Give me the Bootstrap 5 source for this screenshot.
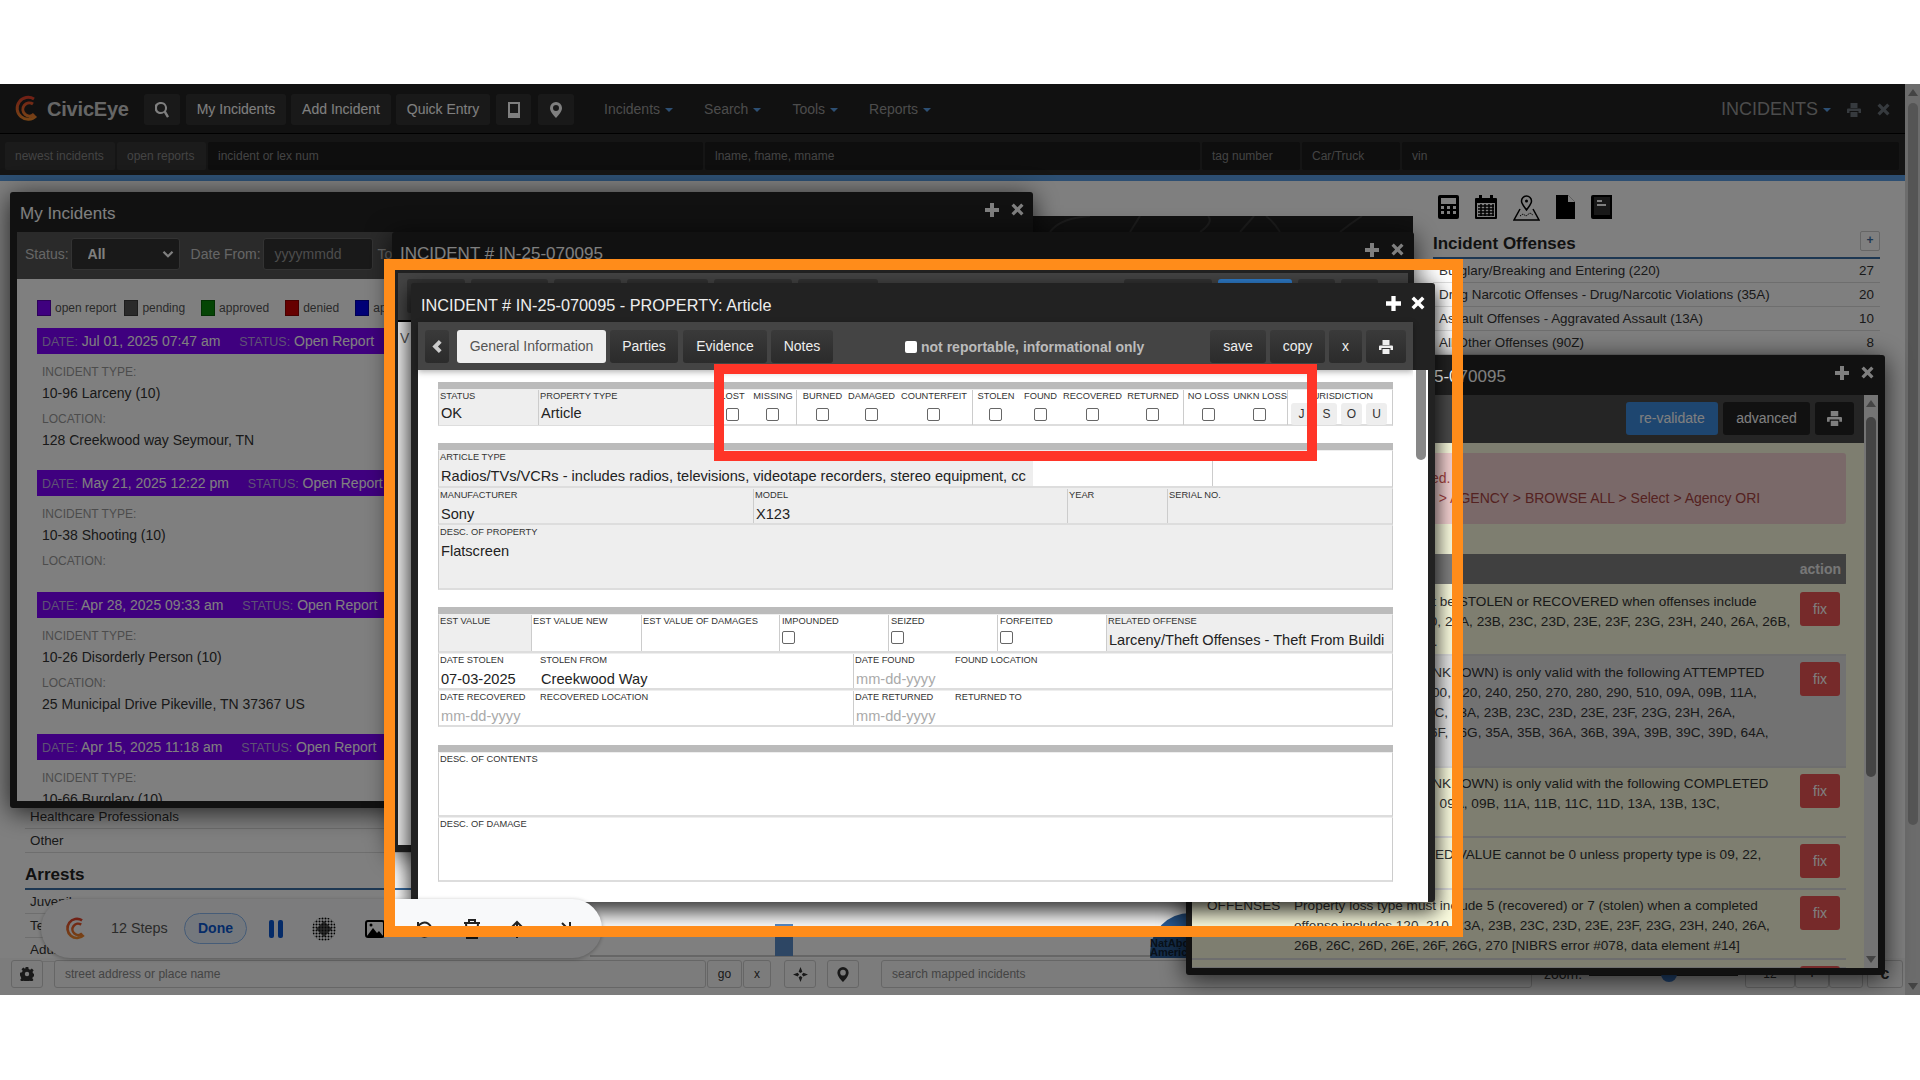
<!DOCTYPE html>
<html lang="en">
<head>
  <meta charset="UTF-8">
  <title>CivicEye - Incident Property</title>
  <link rel="stylesheet" href="https://cdn.jsdelivr.net/npm/bootstrap@5.3.0/dist/css/bootstrap.min.css">
  <style>
    body { margin: 0; background: #fff; font-family: "Liberation Sans", Arial, sans-serif; font-size: 14px; color: #333; }
    .app { position: relative; margin-top: 84px; height: 911px; overflow: hidden; background: #fff; }
    .ico { display: block; fill: currentColor; fill-rule: evenodd; }

    /* top bars */
    .topbar { height: 50px; background: #222; padding: 10px 30px 0 15px; border-bottom: 1px solid #000; }
    .brand { width: 129px; color: #ccc; font-size: 20px; font-weight: 700; letter-spacing: -.2px; line-height: 30px; }
    .nbtn { height: 31px; padding: 0; background: #333; color: #fff; border: 0; border-radius: 3px; font-size: 14px; line-height: 31px; text-align: center; }
    .nb-search { width: 36px; margin-right: 6px; }
    .nb-mine, .nb-add { width: 100px; margin-right: 5px; }
    .nb-quick { width: 94px; margin-right: 6px; }
    .nb-book { width: 35px; margin-right: 7px; }
    .nb-pin { width: 36px; margin-right: 30px; }
    .menu-item { color: #999; margin-right: 31px; line-height: 31px; white-space: nowrap; }
    .caret-dn { display: inline-block; margin-left: 5px; border: 4px solid transparent; border-top-color: #5a9fe6; border-bottom: 0; vertical-align: middle; }
    .modulename { color: #999; font-size: 18px; line-height: 31px; }
    .subbar { height: 41px; background: #2a2a2a; padding: 8px 5px 0 5px; gap: 2px; }
    .sbox { height: 28px; background: #1c1c1c; color: #888; font-size: 12px; line-height: 28px; padding: 0 10px; border-radius: 2px; white-space: nowrap; }
    .sbtn { background: #363636; }
    .sb-a { width: 110px; } .sb-b { width: 89px; } .sb-c { width: 495px; } .sb-d { width: 495px; }
    .sb-e { width: 98px; } .sb-f { width: 98px; } .sb-g { width: 497px; }
    .blueline { height: 6px; background: #5a9fe6; }

    /* page under the windows */
    .mainarea { height: 777px; }
    .leftcol { width: 590px; padding: 0 0 0 25px; margin-bottom: -4px; }
    .leftlist .lrow { padding-left: 5px; height: 24px; line-height: 24px; font-size: 13.4px; border-bottom: 1px solid #ddd; white-space: nowrap; }
    .lhead { font-size: 17px; font-weight: 700; line-height: 24px; margin-top: 10px; padding-bottom: 1px; border-bottom: 2px solid #3a6ea5; color: #222; }
    .mapcol { width: 843px; position: relative; overflow: hidden; }
    .mapline { position: absolute; left: 0; right: 0; bottom: 1px; height: 2px; background: #ccc; }
    .mapbar { position: absolute; left: 185px; bottom: 2px; width: 18px; height: 32px; background: #5a8cc8; }
    .globe { position: absolute; left: 560px; bottom: -35px; width: 80px; height: 80px; border-radius: 50%; background: #2b5f9c; }
    .globetxt { position: absolute; left: 560px; bottom: 1px; font-size: 11px; line-height: 9px; color: #123; font-weight: 700; white-space: nowrap; }
    .rightcol { width: 447px; padding-top: 14px; }
    .tool-ico { gap: 16px; padding-left: 5px; height: 26px; color: #000; }
    .rhead { margin-top: 11px; height: 27px; border-bottom: 2px solid #3a6ea5; font-size: 17px; font-weight: 700; color: #222; line-height: 24px; }
    .rplus { width: 20px; height: 20px; border: 1px solid #ccc; border-radius: 2px; line-height: 16px; text-align: center; font-size: 12px; color: #3a6ea5; margin-top: -1px; }
    .rrow { height: 24px; line-height: 24px; padding: 0 6px; border-bottom: 1px solid #ddd; color: #333; font-size: 13.4px; }
    .pagebar { height: 37px; background: #f9f9f9; padding: 2px 0 0 11px; }
    .fbtn { height: 28px; background: #f9f9f9; border: 1px solid #ccc; border-radius: 3px; font-size: 12px; line-height: 26px; text-align: center; color: #333; }
    .fb-set { width: 32px; margin-right: 11px; padding-top: 6px; }
    .fb-addr { width: 652px; text-align: left; padding-left: 10px; color: #888; }
    .fb-go { width: 35px; margin-left: 1px; margin-right: 1px; }
    .fb-x { width: 28px; margin-right: 13px; }
    .fb-cross { width: 32px; margin-right: 11px; padding-top: 6px; }
    .fb-mapped { width: 651px; margin-left: 22px; text-align: left; padding-left: 10px; color: #888; }
    .zoomlab { margin-left: 12px; width: 45px; line-height: 28px; color: #333; }
    .zoomtrack { width: 149px; height: 4px; margin: 12px 7px 0 0; background: #333; position: relative; }
    .zoomthumb { position: absolute; left: 72px; top: -6px; width: 16px; height: 16px; border-radius: 50%; background: #3c7dd0; }
    .fb-num { width: 50px; }
    .fb-step { width: 34px; font-weight: 700; }
    .fb-rf { width: 36px; margin-left: 4px; font-size: 16px; font-weight: 700; }
    .vscroll { position: absolute; right: 0; top: 0; bottom: 0; width: 15px; background: #d8d8d8; }
    .vthumb { position: absolute; left: 3px; right: 2px; top: 19px; height: 722px; background: #aaa; border-radius: 5px; }
    .arr-up { position: absolute; left: 3px; top: 5px; border: 5px solid transparent; border-bottom: 7px solid #888; border-top: 0; }
    .arr-dn { position: absolute; left: 3px; bottom: 5px; border: 5px solid transparent; border-top: 7px solid #888; border-bottom: 0; }

    /* windows on the desktop */
    .win { position: absolute; background: #222; border-radius: 3px; overflow: hidden; box-shadow: 0 4px 26px rgba(0,0,0,.75); color: #333; }
    .win-head { color: #fff; font-size: 17px; white-space: nowrap; }
    .win-tools { color: #fff; gap: 12px; margin-top: 2px; }
    .win-my { left: 10px; top: 108px; width: 1023px; height: 616px; padding: 0 8px 7px 7px; z-index: 10; }
    .win-my .win-head { height: 40px; padding: 9px 1px 0 3px; }
    .my-filter { height: 47px; background: #555; padding: 6px 0 0 8px; color: #ccc; white-space: nowrap; }
    .my-filter .fsel { width: 109px; height: 32px; margin: 0 11px 0 2px; padding: 0 10px 0 16px; font-size: 14px; font-weight: 700; color: #fff; background-color: #333; border: 1px solid #666; border-radius: 3px; background-size: 12px; background-image: url("data:image/svg+xml,%3csvg xmlns='http://www.w3.org/2000/svg' viewBox='0 0 16 16'%3e%3cpath fill='none' stroke='%23fff' stroke-width='3' d='m2 5 6 6 6-6'/%3e%3c/svg%3e"); background-position: right 5px center; }
    .my-filter .finp { width: 110px; height: 32px; margin: 0 5px 0 2px; padding: 0 11px; font-size: 14px; background: #333; border: 1px solid #666; border-radius: 3px; color: #999; line-height: 30px; }
    .my-filter span { line-height: 32px; }
    .my-body { background: #fff; height: 522px; padding: 9px 0 0 20px; overflow: hidden; }
    .legend { font-size: 12px; height: 40px; color: #555; line-height: 18px; }
    .lg { width: 14px; height: 16px; margin-right: 4px; border: 1px solid rgba(0,0,0,.3); }
    .lgt { margin-right: 8px; }
    .lg-p { background: #7f00ff; } .lg-k { background: #555; } .lg-g { background: #0a8a0a; } .lg-r { background: #c00; } .lg-b { background: #00e; }
    .inc-bar { height: 26px; background: #7f00ff; color: #fff; line-height: 26px; padding-left: 5px; width: 980px; white-space: nowrap; }
    .inc-bar i { font-style: normal; color: #bda6e8; font-size: 12.5px; }
    .inc-gap { margin-left: 15px; }
    .inc-block { padding-left: 5px; padding-bottom: 20px; white-space: nowrap; }
    .inc-block.noloc { padding-bottom: 22px; }
    .inc-lab { font-size: 12px; color: #999; line-height: 18px; margin-top: 9px; }
    .inc-lab.second { margin-top: 7px; }
    .inc-val { line-height: 20px; color: #333; margin-top: 2px; }

    .strip { position: absolute; left: 600px; top: 132px; width: 813px; height: 40px; background: #222; z-index: 9; }
    .strip svg { display: block; }
    .win-second { left: 392px; top: 148px; width: 1022px; height: 620px; padding: 0 6px 7px 6px; z-index: 11; }
    .win-second .win-head { height: 41px; padding: 9px 4px 0 2px; }
    .sec-bar { height: 49px; background: #444; padding: 6px 0 0 9px; gap: 6px; border-bottom: 2px solid #000; }
    .sec-tab { height: 34px; background: #333; border-radius: 3px; }
    .st1 { width: 58px; } .st2 { width: 77px; } .st3 { width: 67px; } .st4 { width: 81px; } .st5 { width: 78px; } .st6 { width: 80px; }
    .st7 { width: 88px; margin-left: 240px; } .st8 { width: 74px; background: #2f7fd0; } .st9, .st10 { width: 37px; }
    .sec-body { height: 523px; background: #eee; padding-top: 6px; font-size: 14px; color: #555; padding-left: 2px; }

    .win-val { left: 1186px; top: 271px; width: 699px; height: 620px; padding: 0 7px 7px 6px; z-index: 12; }
    .win-val .win-head { height: 40px; padding: 9px 4px 0 111px; }
    .val-inner { height: 573px; background: #fcfde0; position: relative; overflow: hidden; padding-right: 14px; font-size: 13.6px; }
    .val-bar { height: 48px; background: #4a4a4a; padding: 7px 10px 0 0; gap: 5px; }
    .nbtn.reval { width: 92px; height: 33px; line-height: 33px; background: #3c8ce0; }
    .nbtn.adv { width: 87px; height: 33px; line-height: 33px; background: #222; }
    .nbtn.vprint { width: 39px; height: 33px; background: #222; padding: 8px 12px; }
    .val-alert { margin: 10px 18px 0 0; height: 71px; background: #f5d2d2; border-radius: 3px; color: #a94442; padding: 15px 0 0 239px; font-size: 14px; white-space: nowrap; }
    .val-alert div { line-height: 20px; }
    .val-thead { margin: 30px 18px 0 0; height: 30px; background: #808080; color: #eee; font-size: 14px; font-weight: 700; line-height: 30px; text-align: right; padding-right: 5px; }
    .vrow { margin-right: 18px; border-bottom: 2px solid #ddd; padding: 7px 0 0 15px; position: relative; line-height: 20px; white-space: nowrap; color: #333; }
    .vrow.alt { background: #e5e5e5; }
    .vh-1 { height: 72px; padding-top: 8px; } .vh-2 { height: 112px; } .vh-3 { height: 70px; padding-top: 6px; } .vh-4 { height: 52px; } .vh-5 { height: 70px; padding-top: 6px; }
    .vtag { width: 87px; flex: none; }
    .fix { position: absolute; right: 6px; top: 6px; width: 40px; height: 34px; padding: 0; line-height: 34px; font-size: 14px; background: #ec5454; color: #fff; border: 0; border-radius: 3px; }
    .vh-1 .fix { top: 8px; }
    .vscr { position: absolute; right: 0; top: 0; bottom: 0; width: 14px; background: #e8e8e8; }
    .vscr .vthumb { top: 22px; height: 360px; left: 2px; right: 2px; background: #888; }
    .vscr .arr-up { left: 2px; } .vscr .arr-dn { left: 2px; }

    .win-fore { left: 411px; top: 199px; width: 1024px; height: 619px; padding: 0 7px 7px 7px; z-index: 13; box-shadow: 0 8px 20px 2px rgba(0,0,0,.8); }
    .win-fore .win-head { height: 39px; padding: 10px 3px 0 3px; color: #eee; font-size: 16.3px; }
    .win-fore .win-tools { gap: 10px; margin-top: 3px; }
    .fore-bar { height: 48px; background: #444; padding: 8px 7px 0 7px; margin-right: 15px; box-shadow: 0 2px 6px rgba(0,0,0,.3); position: relative; z-index: 1; }
    .tbtn { height: 33px; line-height: 33px; background: linear-gradient(#3a3a3a, #2b2b2b); color: #eee; border: 0; border-radius: 3px; padding: 0; font-size: 14px; text-align: center; }
    .tb-back { width: 24px; margin-right: 8px; padding: 10px 7px; color: #ccc; }
    .tb-gen { width: 149px; margin-right: 4px; background: #eee; color: #555; }
    .tb-par { width: 68px; margin-right: 5px; }
    .tb-evi { width: 84px; margin-right: 4px; }
    .tb-not { width: 62px; margin-right: 72px; }
    .tb-save { width: 56px; margin-right: 4px; }
    .tb-copy { width: 55px; margin-right: 4px; }
    .tb-x { width: 33px; margin-right: 4px; }
    .tb-print { width: 40px; padding: 9px 13px; }
    .fore-chk { width: 12px; height: 12px; background: #fff; border-radius: 2px; margin: 11px 4px 0 0; flex: none; }
    .fore-note { color: #bbb; font-weight: 700; margin-top: 7px; line-height: 20px; white-space: nowrap; }
    .fore-inner { height: 573px; background: #fff; position: relative; padding: 12px 0 0 20px; overflow: hidden; }
    .fscr { position: absolute; right: 0; top: -48px; bottom: 0; width: 15px; background: #fff; z-index: 2; }
    .fscr .vthumb { top: 18px; height: 120px; left: 3px; right: 2px; background: #888; }
    .fsect { width: 955px; margin-bottom: 17px; }
    .fsect.wide-gap { margin-bottom: 18px; }
    .fbarline { height: 7px; background: #bbb; }
    .frow { display: grid; border: 1px solid #ccc; border-width: 0 1px; border-bottom: 2px solid #ddd; border-top: 1px solid #eee; }
    .cf { overflow: hidden; white-space: nowrap; }
    .gr { background: #eee; }
    .bd-r { border-right: 1px solid #ccc; }
    .flb { font-size: 9.3px; line-height: 11px; color: #333; padding: 1px 0 0 1px; white-space: nowrap; }
    .fv { font-size: 14.6px; line-height: 24px; padding: 1px 0 0 2px; color: #222; white-space: nowrap; overflow: hidden; }
    .r-top .fv { line-height: 22px; padding-top: 0; }
    .fph { color: #aaa; }
    .fchk { text-align: center; }
    .fchk .form-check-input, .cbleft .form-check-input { width: 13px; height: 13px; margin: 6px 0 0 0; border: 1px solid #666; border-radius: 2px; float: none; display: inline-block; vertical-align: top; }
    .cbleft .form-check-input { margin-top: 4px; }
    .lost-cell { padding-right: 4px; }
    .cbleft { padding-left: 2px; }
    .flb.jlab { padding-left: 20px; }
    .jbtn { width: 21px; height: 22px; line-height: 22px; background: #eee; border-radius: 3px; text-align: center; font-size: 12px; color: #333; }
    .jwrap { gap: 4px; padding: 1px 0 0 3px; }
    .r-top { grid-template-columns: 100px 180px 30px 48px 50px 48px 78px 45px 44px 60px 62px 48px 56px 1fr; height: 37px; }
    .r-art { grid-template-columns: 594px 180px 1fr; height: 38px; }
    .r-man { grid-template-columns: 315px 314px 100px 1fr; height: 37px; }
    .r-one { grid-template-columns: 1fr; }
    .h-desc { height: 65px; }
    .h-c { height: 65px; }
    .r-est { grid-template-columns: 93px 110px 138px 109px 109px 109px 1fr; height: 39px; }
    .r-date { grid-template-columns: 100px 315px 100px 1fr; height: 37px; }

    /* recorder widget */
    .pillbar { position: absolute; left: 41px; top: 815px; width: 561px; height: 59px; border-radius: 30px; background: #f8f9fa; z-index: 14; box-shadow: 0 1px 4px rgba(0,0,0,.3); padding-left: 24px; }
    .pl-logo { margin-right: 24px; }
    .pl-steps { color: #555; font-size: 14.4px; width: 73px; white-space: nowrap; }
    .pl-done { width: 63px; height: 31px; border: 1px solid #8bb8f0; border-radius: 16px; background: #e8f0fb; color: #0b57d0; font-weight: 700; font-size: 14px; line-height: 29px; padding: 0; margin-right: 22px; }
    .pl-ico { margin-right: 29px; color: #111; flex: none; }

    /* highlight marks laid over the recording */
    .spot { position: absolute; left: 384px; top: 175px; width: 1079px; height: 678px; border: 11px solid #ff8c1a; box-shadow: 0 0 0 3000px rgba(0,0,0,.5); z-index: 20; pointer-events: none; }
    .redbox { position: absolute; left: 714px; top: 280px; width: 603px; height: 97px; border: 10px solid #ff3528; z-index: 21; pointer-events: none; }
  </style>
</head>
<body>
  <svg width="0" height="0" class="position-absolute">
    <defs>
      <symbol id="i-plus" viewBox="0 0 14 14"><path d="M5 0h4v5h5v4H9v5H5V9H0V5h5z"/></symbol>
      <symbol id="i-x" viewBox="0 0 14 14"><path d="M3 .5 7 4.5 11 .5 13.500 3 9.500 7 13.500 11 11 13.500 7 9.500 3 13.500 .5 11 4.500 7 .5 3z"/></symbol>
      <symbol id="i-print" viewBox="0 0 14 14"><path d="M3.500 0h7v5h-7zM1 5.500h12a1 1 0 0 1 1 1V10h-2.500V8h-9v2H0V6.500a1 1 0 0 1 1-1zM3.500 9h7v5h-7z"/></symbol>
      <symbol id="i-search" viewBox="0 0 14 16"><path d="M6 0a6 6 0 0 1 5 9.300L14 14.500 12 15.800 9 10.800A6 6 0 1 1 6 0zm0 2a4 4 0 1 0 0 8 4 4 0 0 0 0-8z"/></symbol>
      <symbol id="i-pin" viewBox="0 0 12 16"><path d="M6 0a6 6 0 0 1 6 6c0 3-3 7-6 10C3 13 0 9 0 6a6 6 0 0 1 6-6zm0 3a3 3 0 1 0 0 6 3 3 0 0 0 0-6z"/></symbol>
      <symbol id="i-book" viewBox="0 0 14 16"><path d="M1 0h12v16H1zM3 2v9h8V2z"/></symbol>
      <symbol id="i-left" viewBox="0 0 10 14"><path d="M7 0 10 3 6 7 10 11 7 14 0 7z"/></symbol>
      <symbol id="i-gear" viewBox="0 0 16 16"><path d="M6.500 0h3l.4 2.300 1.700.7 1.900-1.300 2.100 2.100-1.300 1.900.7 1.700 2.100.4v3l-2.300.4-.7 1.700 1.300 1.900-2.100 2.100-1.900-1.300-1.700.7-.4 2.300h-3l-.4-2.300-1.700-.7-1.900 1.300-2.100-2.100 1.300-1.900-.7-1.700L0 9.500v-3l2.300-.4.7-1.700L1.700 2.500 3.800.6l1.900 1.300L6.100 1.500zM8 5.500a2.500 2.500 0 1 0 0 5 2.500 2.500 0 0 0 0-5z"/></symbol>
      <symbol id="i-cross" viewBox="0 0 16 16"><path d="M8 0 10 5 8 6.500 6 5zM8 16 6 11 8 9.500 10 11zM0 8 5 6 6.500 8 5 10zM16 8 11 10 9.500 8 11 6z"/></symbol>
    </defs>
  </svg>

  <div class="app">
    <div class="topbar d-flex align-items-start">
      <div class="brand d-flex">
        <svg width="24" height="30" viewBox="0 0 24 30" class="me-2 flex-none">
          <defs><linearGradient id="lg1" x1="0" y1="0" x2="0" y2="1"><stop offset="0" stop-color="#e2402a"/><stop offset="1" stop-color="#f08a2c"/></linearGradient></defs>
          <path d="M19 5a11 11 0 1 0 2 17M18 10a6.500 6.500 0 1 0 1 10" fill="none" stroke="url(#lg1)" stroke-width="3"/>
          <path d="M10 15h8" stroke="url(#lg1)" stroke-width="3"/>
        </svg>
        <span>CivicEye</span>
      </div>
      <button class="nbtn nb-search d-flex justify-content-center align-items-center"><svg width="14" height="16" class="ico"><use href="#i-search"/></svg></button>
      <button class="nbtn nb-mine">My Incidents</button>
      <button class="nbtn nb-add">Add Incident</button>
      <button class="nbtn nb-quick">Quick Entry</button>
      <button class="nbtn nb-book d-flex justify-content-center align-items-center"><svg width="14" height="16" class="ico"><use href="#i-book"/></svg></button>
      <button class="nbtn nb-pin d-flex justify-content-center align-items-center"><svg width="12" height="16" class="ico"><use href="#i-pin"/></svg></button>
      <div class="menu-item">Incidents<span class="caret-dn"></span></div>
      <div class="menu-item">Search<span class="caret-dn"></span></div>
      <div class="menu-item">Tools<span class="caret-dn"></span></div>
      <div class="menu-item">Reports<span class="caret-dn"></span></div>
      <div class="ms-auto d-flex align-items-center">
        <span class="modulename">INCIDENTS<span class="caret-dn"></span></span>
        <svg width="14" height="14" class="ico ms-3 text-secondary"><use href="#i-print"/></svg>
        <svg width="13" height="13" class="ico ms-3 text-secondary"><use href="#i-x"/></svg>
      </div>
    </div>
    <div class="subbar d-flex">
      <div class="sbox sbtn sb-a">newest incidents</div>
      <div class="sbox sbtn sb-b">open reports</div>
      <div class="sbox sb-c">incident or lex num</div>
      <div class="sbox sb-d">lname, fname, mname</div>
      <div class="sbox sb-e">tag number</div>
      <div class="sbox sb-f">Car/Truck</div>
      <div class="sbox sb-g">vin</div>
    </div>
    <div class="blueline"></div>

    <div class="mainarea d-flex">
      <div class="leftcol d-flex flex-column justify-content-end leftlist">
        <div class="lrow">Healthcare Professionals</div>
        <div class="lrow">Other</div>
        <div class="lhead">Arrests</div>
        <div class="lrow">Juveniles</div>
        <div class="lrow">Teens</div>
        <div class="lrow">Adults</div>
      </div>
      <div class="mapcol">
        <div class="mapline"></div>
        <div class="mapbar"></div>
        <div class="globe"></div>
        <div class="globetxt">NatAbo<br>American</div>
      </div>
      <div class="rightcol">
        <div class="tool-ico d-flex">
          <svg width="21" height="24" viewBox="0 0 21 24"><rect width="21" height="24" rx="2"/><rect x="3" y="3" width="15" height="6" fill="#fff"/><g fill="#fff"><rect x="3" y="11" width="3" height="3"/><rect x="9" y="11" width="3" height="3"/><rect x="15" y="11" width="3" height="3"/><rect x="3" y="16" width="3" height="3"/><rect x="9" y="16" width="3" height="3"/><rect x="15" y="16" width="3" height="3"/></g></svg>
          <svg width="22" height="24" viewBox="0 0 22 24"><rect y="3" width="22" height="21" rx="1"/><rect x="4" width="3" height="5"/><rect x="15" width="3" height="5"/><rect x="2" y="8" width="18" height="14" fill="#fff"/><path d="M3 11h16M3 14h16M3 17h16M3 20h16M6 9v12M10 9v12M14 9v12M18 9v12" stroke="#000" stroke-width="1.500"/></svg>
          <svg width="27" height="26" viewBox="0 0 27 26"><path d="M7 14 1 25h25l-6-11" fill="none" stroke="#000" stroke-width="1.500"/><path d="M13.500 1a5 5 0 0 1 5 5c0 3-3 6-5 9-2-3-5-6-5-9a5 5 0 0 1 5-5z" fill="none" stroke="#000" stroke-width="1.500"/><circle cx="13.500" cy="6" r="1.500"/><path d="M7 21l3-2 3 2 4-3 3 2" fill="none" stroke="#000" stroke-dasharray="1.500 1"/></svg>
          <svg width="19" height="24" viewBox="0 0 19 24"><path d="M0 0h12l7 7v17H0z"/><path d="M12 0v7h7" fill="#fff"/></svg>
          <svg width="21" height="24" viewBox="0 0 21 24"><path d="M2 0h19v24H2a2 2 0 0 1-2-2V2a2 2 0 0 1 2-2z"/><rect x="3" y="2" width="16" height="18" fill="#333"/><rect x="6" y="5" width="5" height="2" fill="#fff"/><rect x="6" y="9" width="9" height="2" fill="#fff"/></svg>
        </div>
        <div class="rhead d-flex justify-content-between"><span>Incident Offenses</span><span class="rplus">+</span></div>
        <div class="rrow d-flex justify-content-between"><span>Burglary/Breaking and Entering (220)</span><span>27</span></div>
        <div class="rrow d-flex justify-content-between"><span>Drug Narcotic Offenses - Drug/Narcotic Violations (35A)</span><span>20</span></div>
        <div class="rrow d-flex justify-content-between"><span>Assault Offenses - Aggravated Assault (13A)</span><span>10</span></div>
        <div class="rrow d-flex justify-content-between"><span>All Other Offenses (90Z)</span><span>8</span></div>
      </div>
    </div>

    <div class="pagebar d-flex">
      <div class="fbtn fb-set d-flex justify-content-center"><svg width="14" height="14" class="ico"><use href="#i-gear"/></svg></div>
      <div class="fbtn fb-addr">street address or place name</div>
      <div class="fbtn fb-go">go</div>
      <div class="fbtn fb-x">x</div>
      <div class="fbtn fb-cross d-flex justify-content-center"><svg width="15" height="15" class="ico"><use href="#i-cross"/></svg></div>
      <div class="fbtn fb-cross d-flex justify-content-center me-0"><svg width="12" height="15" class="ico"><use href="#i-pin"/></svg></div>
      <div class="fbtn fb-mapped">search mapped incidents</div>
      <div class="zoomlab">zoom:</div>
      <div class="zoomtrack"><span class="zoomthumb"></span></div>
      <div class="fbtn fb-num">12</div>
      <div class="fbtn fb-step">+</div>
      <div class="fbtn fb-step">-</div>
      <div class="fbtn fb-rf">c</div>
    </div>
    <div class="vscroll"><span class="arr-up"></span><span class="vthumb"></span><span class="arr-dn"></span></div>

    <!-- My Incidents window -->
    <div class="win win-my">
      <div class="win-head d-flex justify-content-between">
        <span>My Incidents</span>
        <div class="win-tools d-flex"><svg width="14" height="14" class="ico"><use href="#i-plus"/></svg><svg width="13" height="13" class="ico"><use href="#i-x"/></svg></div>
      </div>
      <div class="my-filter d-flex">
        <span>Status:</span>
        <select class="form-select fsel"><option>All</option></select>
        <span>Date From:</span>
        <div class="finp">yyyymmdd</div>
        <span>To</span>
      </div>
      <div class="my-body">
        <div class="legend d-flex align-items-center">
          <span class="lg lg-p"></span><span class="lgt">open report</span>
          <span class="lg lg-k"></span><span class="lgt">pending</span>
          <span class="lg lg-g ms-2"></span><span class="lgt">approved</span>
          <span class="lg lg-r ms-2"></span><span class="lgt">denied</span>
          <span class="lg lg-b ms-2"></span><span class="lgt">approved</span>
        </div>
        <div class="inc-bar"><i>DATE:</i> Jul 01, 2025 07:47 am <span class="inc-gap"><i>STATUS:</i> Open Report</span></div>
        <div class="inc-block">
          <div class="inc-lab">INCIDENT TYPE:</div><div class="inc-val">10-96 Larceny (10)</div>
          <div class="inc-lab second">LOCATION:</div><div class="inc-val">128 Creekwood way Seymour, TN</div>
        </div>
        <div class="inc-bar"><i>DATE:</i> May 21, 2025 12:22 pm <span class="inc-gap"><i>STATUS:</i> Open Report</span></div>
        <div class="inc-block noloc">
          <div class="inc-lab">INCIDENT TYPE:</div><div class="inc-val">10-38 Shooting (10)</div>
          <div class="inc-lab second">LOCATION:</div>
        </div>
        <div class="inc-bar"><i>DATE:</i> Apr 28, 2025 09:33 am <span class="inc-gap"><i>STATUS:</i> Open Report</span></div>
        <div class="inc-block">
          <div class="inc-lab">INCIDENT TYPE:</div><div class="inc-val">10-26 Disorderly Person (10)</div>
          <div class="inc-lab second">LOCATION:</div><div class="inc-val">25 Municipal Drive Pikeville, TN 37367 US</div>
        </div>
        <div class="inc-bar"><i>DATE:</i> Apr 15, 2025 11:18 am <span class="inc-gap"><i>STATUS:</i> Open Report</span></div>
        <div class="inc-block">
          <div class="inc-lab">INCIDENT TYPE:</div><div class="inc-val">10-66 Burglary (10)</div>
        </div>
      </div>
    </div>

    <div class="strip">
      <svg width="813" height="16" viewBox="0 0 813 16" fill="none" stroke="#3a3a3a" stroke-width="2"><path d="M450 16q10-14 40-16M530 16l10-16M600 16q14-10 8-16M640 16l14-16M680 16q-6-10-14-16M740 16q10-8 22-16"/></svg>
    </div>

    <!-- incident window behind the property form -->
    <div class="win win-second">
      <div class="win-head d-flex justify-content-between">
        <span>INCIDENT # IN-25-070095</span>
        <div class="win-tools d-flex"><svg width="14" height="14" class="ico"><use href="#i-plus"/></svg><svg width="13" height="13" class="ico"><use href="#i-x"/></svg></div>
      </div>
      <div class="sec-bar d-flex">
        <div class="sec-tab st1"></div><div class="sec-tab st2"></div><div class="sec-tab st3"></div><div class="sec-tab st4"></div><div class="sec-tab st5"></div><div class="sec-tab st6"></div>
        <div class="sec-tab st7"></div><div class="sec-tab st8"></div><div class="sec-tab st9"></div><div class="sec-tab st10"></div>
      </div>
      <div class="sec-body">V</div>
    </div>

    <!-- validation window -->
    <div class="win win-val">
      <div class="win-head d-flex justify-content-between">
        <span>INCIDENT # IN-25-070095</span>
        <div class="win-tools d-flex"><svg width="14" height="14" class="ico"><use href="#i-plus"/></svg><svg width="13" height="13" class="ico"><use href="#i-x"/></svg></div>
      </div>
      <div class="val-inner">
        <div class="val-bar d-flex justify-content-end">
          <button class="nbtn reval">re-validate</button>
          <button class="nbtn adv">advanced</button>
          <button class="nbtn vprint"><svg width="15" height="15" class="ico" viewBox="0 0 14 14"><use href="#i-print"/></svg></button>
        </div>
        <div class="val-alert">
          <div>ed.</div>
          <div>I &gt; AGENCY &gt; BROWSE ALL &gt; Select &gt; Agency ORI</div>
        </div>
        <div class="val-thead">action</div>
        <div class="vrow vh-1 d-flex"><span class="vtag"></span><div>Property loss type must be STOLEN or RECOVERED when offenses include<br>offenses listed 120, 210, 23A, 23B, 23C, 23D, 23E, 23F, 23G, 23H, 240, 26A, 26B,<br>26C, 26D, 26E, or 270).</div><button class="fix">fix</button></div>
        <div class="vrow vh-2 alt d-flex"><span class="vtag"></span><div>Property loss type 8 (UNKNOWN) is only valid with the following ATTEMPTED<br>offenses of 100, 120, 200, 220, 240, 250, 270, 280, 290, 510, 09A, 09B, 11A,<br>11B, 11C, 11D, 13B, 13C, 23A, 23B, 23C, 23D, 23E, 23F, 23G, 23H, 26A,<br>26B, 26C, 26D, 26E, 26F, 26G, 35A, 35B, 36A, 36B, 39A, 39B, 39C, 39D, 64A,</div><button class="fix">fix</button></div>
        <div class="vrow vh-3 d-flex"><span class="vtag"></span><div>Property loss type 8 (UNKNOWN) is only valid with the following COMPLETED<br>offenses 100, 220, 510, 09A, 09B, 11A, 11B, 11C, 11D, 13A, 13B, 13C,</div><button class="fix">fix</button></div>
        <div class="vrow vh-4 d-flex"><span class="vtag"></span><div>Property loss ESTIMATED VALUE cannot be 0 unless property type is 09, 22,</div><button class="fix">fix</button></div>
        <div class="vrow vh-5 d-flex"><span class="vtag">OFFENSES</span><div>Property loss type must include 5 (recovered) or 7 (stolen) when a completed<br>offense includes 120, 210, 23A, 23B, 23C, 23D, 23E, 23F, 23G, 23H, 240, 26A,<br>26B, 26C, 26D, 26E, 26F, 26G, 270 [NIBRS error #078, data element #14]</div><button class="fix">fix</button></div>
        <div class="vrow d-flex"><button class="fix">fix</button></div>
        <div class="vscr"><span class="arr-up"></span><span class="vthumb"></span><span class="arr-dn"></span></div>
      </div>
    </div>

    <!-- property form window -->
    <div class="win win-fore">
      <div class="win-head d-flex justify-content-between">
        <span>INCIDENT # IN-25-070095 - PROPERTY: Article</span>
        <div class="win-tools d-flex"><svg width="15" height="15" class="ico"><use href="#i-plus"/></svg><svg width="14" height="14" class="ico"><use href="#i-x"/></svg></div>
      </div>
      <div class="fore-bar d-flex">
        <button class="tbtn tb-back"><svg width="10" height="13" class="ico"><use href="#i-left"/></svg></button>
        <button class="tbtn tb-gen">General Information</button>
        <button class="tbtn tb-par">Parties</button>
        <button class="tbtn tb-evi">Evidence</button>
        <button class="tbtn tb-not">Notes</button>
        <span class="fore-chk"></span>
        <span class="fore-note">not reportable, informational only</span>
        <button class="tbtn tb-save ms-auto">save</button>
        <button class="tbtn tb-copy">copy</button>
        <button class="tbtn tb-x">x</button>
        <button class="tbtn tb-print"><svg width="14" height="14" class="ico"><use href="#i-print"/></svg></button>
      </div>
      <div class="fore-inner">
        <div class="fscr"><span class="arr-up"></span><span class="vthumb"></span><span class="arr-dn"></span></div>

        <div class="fsect">
          <div class="fbarline"></div>
          <div class="frow r-top">
            <div class="cf gr bd-r"><div class="flb">STATUS</div><div class="fv">OK</div></div>
            <div class="cf gr"><div class="flb">PROPERTY TYPE</div><div class="fv">Article</div></div>
            <div class="fchk lost-cell"><div class="flb">LOST</div><input class="form-check-input" type="checkbox"></div>
            <div class="fchk bd-r"><div class="flb">MISSING</div><input class="form-check-input" type="checkbox"></div>
            <div class="fchk"><div class="flb">BURNED</div><input class="form-check-input" type="checkbox"></div>
            <div class="fchk"><div class="flb">DAMAGED</div><input class="form-check-input" type="checkbox"></div>
            <div class="fchk bd-r"><div class="flb">COUNTERFEIT</div><input class="form-check-input" type="checkbox"></div>
            <div class="fchk"><div class="flb">STOLEN</div><input class="form-check-input" type="checkbox"></div>
            <div class="fchk"><div class="flb">FOUND</div><input class="form-check-input" type="checkbox"></div>
            <div class="fchk"><div class="flb">RECOVERED</div><input class="form-check-input" type="checkbox"></div>
            <div class="fchk bd-r"><div class="flb">RETURNED</div><input class="form-check-input" type="checkbox"></div>
            <div class="fchk"><div class="flb">NO LOSS</div><input class="form-check-input" type="checkbox"></div>
            <div class="fchk bd-r"><div class="flb">UNKN LOSS</div><input class="form-check-input" type="checkbox"></div>
            <div><div class="flb jlab">JURISDICTION</div><div class="jwrap d-flex"><span class="jbtn">J</span><span class="jbtn">S</span><span class="jbtn">O</span><span class="jbtn">U</span></div></div>
          </div>
        </div>

        <div class="fsect">
          <div class="fbarline"></div>
          <div class="frow r-art">
            <div class="cf gr"><div class="flb">ARTICLE TYPE</div><div class="fv">Radios/TVs/VCRs - includes radios, televisions, videotape recorders, stereo equipment, cc</div></div>
            <div class="bd-r"></div>
            <div></div>
          </div>
          <div class="frow r-man">
            <div class="cf gr bd-r"><div class="flb">MANUFACTURER</div><div class="fv">Sony</div></div>
            <div class="cf gr bd-r"><div class="flb">MODEL</div><div class="fv">X123</div></div>
            <div class="cf gr bd-r"><div class="flb">YEAR</div></div>
            <div class="cf gr"><div class="flb">SERIAL NO.</div></div>
          </div>
          <div class="frow r-one h-desc gr">
            <div class="cf"><div class="flb">DESC. OF PROPERTY</div><div class="fv">Flatscreen</div></div>
          </div>
        </div>

        <div class="fsect wide-gap">
          <div class="fbarline"></div>
          <div class="frow r-est">
            <div class="cf gr bd-r"><div class="flb">EST VALUE</div></div>
            <div class="cf bd-r"><div class="flb">EST VALUE NEW</div></div>
            <div class="cf bd-r"><div class="flb">EST VALUE OF DAMAGES</div></div>
            <div class="cf bd-r cbleft"><div class="flb ps-0">IMPOUNDED</div><input class="form-check-input" type="checkbox"></div>
            <div class="cf bd-r cbleft"><div class="flb ps-0">SEIZED</div><input class="form-check-input" type="checkbox"></div>
            <div class="cf bd-r cbleft"><div class="flb ps-0">FORFEITED</div><input class="form-check-input" type="checkbox"></div>
            <div class="cf gr"><div class="flb">RELATED OFFENSE</div><div class="fv">Larceny/Theft Offenses - Theft From Buildi</div></div>
          </div>
          <div class="frow r-date">
            <div class="cf"><div class="flb">DATE STOLEN</div><div class="fv">07-03-2025</div></div>
            <div class="cf bd-r"><div class="flb">STOLEN FROM</div><div class="fv">Creekwood Way</div></div>
            <div class="cf"><div class="flb">DATE FOUND</div><div class="fv fph">mm-dd-yyyy</div></div>
            <div class="cf"><div class="flb">FOUND LOCATION</div></div>
          </div>
          <div class="frow r-date">
            <div class="cf"><div class="flb">DATE RECOVERED</div><div class="fv fph">mm-dd-yyyy</div></div>
            <div class="cf bd-r"><div class="flb">RECOVERED LOCATION</div></div>
            <div class="cf"><div class="flb">DATE RETURNED</div><div class="fv fph">mm-dd-yyyy</div></div>
            <div class="cf"><div class="flb">RETURNED TO</div></div>
          </div>
        </div>

        <div class="fsect">
          <div class="fbarline"></div>
          <div class="frow r-one h-c"><div class="cf"><div class="flb">DESC. OF CONTENTS</div></div></div>
          <div class="frow r-one h-c"><div class="cf"><div class="flb">DESC. OF DAMAGE</div></div></div>
        </div>
      </div>
    </div>

    <!-- recorder widget -->
    <div class="pillbar d-flex align-items-center">
      <svg width="22" height="26" viewBox="0 0 24 30" class="pl-logo flex-none">
        <path d="M19 5a11 11 0 1 0 2 17M18 10a6.500 6.500 0 1 0 1 10" fill="none" stroke="url(#lg1)" stroke-width="3"/>
        <path d="M10 15h8" stroke="url(#lg1)" stroke-width="3"/>
      </svg>
      <span class="pl-steps">12 Steps</span>
      <button class="pl-done">Done</button>
      <svg width="14" height="18" viewBox="0 0 14 18" class="pl-ico"><rect width="5" height="18" rx="2" fill="#0b57d0"/><rect x="9" width="5" height="18" rx="2" fill="#0b57d0"/></svg>
      <svg width="24" height="24" viewBox="0 0 24 24" class="pl-ico">
        <defs>
          <pattern id="pdots" width="3" height="3" patternUnits="userSpaceOnUse"><circle cx="1.500" cy="1.500" r="1"/></pattern>
        </defs>
        <circle cx="12" cy="12" r="12" fill="url(#pdots)"/><path d="M12 4 20 12 12 20 4 12z" fill="#111" opacity=".7"/>
      </svg>
      <svg width="20" height="18" viewBox="0 0 20 18" class="pl-ico"><rect x="1" y="1" width="18" height="16" rx="2" fill="#fff" stroke="#000" stroke-width="2"/><path d="M2 16 8 8l4 5 2-2 4 5z"/><circle cx="6" cy="5" r="1.500"/></svg>
      <svg width="20" height="18" viewBox="0 0 20 18" class="pl-ico" fill="none" stroke="#222" stroke-width="2"><path d="M4 7a7 7 0 1 1 1 7M4 2v5h5"/></svg>
      <svg width="18" height="20" viewBox="0 0 18 20" class="pl-ico" fill="none" stroke="#222" stroke-width="2"><path d="M1 4h16M6 4V1h6v3M3 4l1 15h10l1-15M7 8v8M11 8v8"/></svg>
      <svg width="14" height="18" viewBox="0 0 14 18" class="pl-ico" fill="none" stroke="#222" stroke-width="2"><path d="M7 18V2M1 8l6-6 6 6"/></svg>
      <svg width="18" height="16" viewBox="0 0 18 16" class="pl-ico me-0" fill="none" stroke="#222" stroke-width="2"><path d="M1 8h13M9 2l6 6-6 6M17 1v14"/></svg>
    </div>

    <div class="spot"></div>
    <div class="redbox"></div>
  </div>
  <script src="https://cdn.jsdelivr.net/npm/bootstrap@5.3.0/dist/js/bootstrap.bundle.min.js"></script>
</body>
</html>
